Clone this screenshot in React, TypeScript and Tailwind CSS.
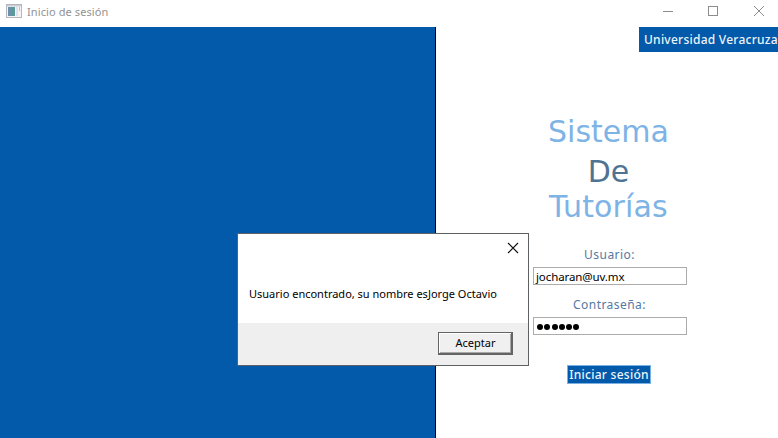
import React from "react";

const uiFont = "font-['Noto_Sans','Open_Sans',sans-serif]";
const wideFont = "font-['DejaVu_Sans',sans-serif]";

function TitleBar() {
  return (
    <header className="flex h-[27px] items-start bg-white">
      <svg className="ml-[6px] mt-[4px] shrink-0" width="16" height="14" viewBox="0 0 16 14">
        <rect x="0.5" y="0.5" width="15" height="13" fill="#f4f4f6" stroke="#b4b8be" />
        <rect x="1" y="1" width="14" height="1.5" fill="#c9ced6" />
        <rect x="2" y="3" width="7" height="9" fill="#5a9a98" />
        <rect x="2" y="3" width="3" height="9" fill="#6e90ad" />
        <rect x="10" y="3" width="2" height="9" fill="#dde2ee" />
        <rect x="13" y="3" width="1" height="4" fill="#b9c3da" />
      </svg>
      <span className="ml-[5px] mt-[4px] whitespace-pre text-[11px] leading-[16px] tracking-[0.1px] text-[#929292]">
        Inicio de sesión
      </span>
      <svg className="ml-auto mr-[13px] mt-[5px] shrink-0" width="103" height="12" viewBox="0 0 103 12" fill="none" stroke="#8c8c8c">
        <path d="M1 6.5h10" />
        <rect x="46.5" y="1.5" width="9" height="9" />
        <path d="M92 1l10 10M102 1L92 11" />
      </svg>
    </header>
  );
}

function Field({ label, children }: { label: string; children: React.ReactNode }) {
  return (
    <div className="flex h-[50px] w-[154px] flex-col items-center">
      <label className="flex h-[22px] items-center pb-[3px] pr-px text-[12px] leading-[16px] tracking-[0.45px] text-[#55799f]">{label}</label>
      <div className="flex h-[18px] w-full items-center border border-[#acacac] bg-white pl-[2px]">{children}</div>
    </div>
  );
}

function LoginPanel() {
  return (
    <section className="flex w-[342px] flex-col overflow-hidden bg-white">
      <div className="ml-[203px] h-[25px] w-[139px] overflow-hidden whitespace-nowrap bg-[#035aaa] pl-[5px] text-[12px] font-medium leading-[25px] tracking-[0.25px] text-[#edf4fb]">
        Universidad Veracruza
      </div>
      <div className="flex flex-col items-center pl-[3px] pt-[62px]">
        <h1 className={`flex flex-col items-center text-[30px] leading-[36px] text-[#7eb3e6] ${wideFont}`}>
          <span className="h-[40px]">Sistema</span>
          <span className="h-[35px] text-[#4f7393]">De</span>
          <span className="h-[36px] tracking-[0.15px]">Tutorías</span>
        </h1>
      </div>
      <form className="ml-[97px] mt-[20px] flex w-[154px] flex-col items-center">
        <Field label="Usuario:">
          <span className="pt-[2px] text-[11.5px] leading-[16px] tracking-[-0.1px] text-black">jocharan@uv.mx</span>
        </Field>
        <Field label="Contraseña:">
          <span className="flex gap-[1.3px] pl-[1px] pt-[2px]">
            {[0, 1, 2, 3, 4, 5].map((n) => (
              <i key={n} className="size-[6px] rounded-full bg-black" />
            ))}
          </span>
        </Field>
        <button type="button" className="mr-[2px] mt-[20px] flex h-[19px] w-[84px] items-center justify-center whitespace-nowrap border border-[#7ab0e2] bg-[#035aaa] text-[12px] font-medium leading-[17px] tracking-[0.27px] text-[#edf4fb]">
          Iniciar sesión
        </button>
      </form>
    </section>
  );
}

function MessageDialog() {
  return (
    <div role="dialog" className="absolute left-[237px] top-[233px] flex h-[133px] w-[292px] flex-col border border-[#5d6164] bg-white">
      <div className="flex h-[89px] flex-col">
        <svg className="ml-auto mr-[9px] mt-[8px]" width="12" height="12" viewBox="0 0 12 12" stroke="#111" strokeWidth="1.1">
          <path d="M1 1l10 10M11 1L1 11" />
        </svg>
        <p className="ml-[11px] mt-[32px] whitespace-nowrap text-[11px] leading-[16px] text-black">
          Usuario encontrado, su nombre esJorge Octavio
        </p>
      </div>
      <div className="flex flex-1 justify-end bg-[#efefef] pr-[15px] pt-[9px]">
        <button type="button" className="flex h-[23px] w-[75px] justify-center border border-b-2 border-r-2 border-[#646464] bg-[#f0f0f0] pl-px pt-px text-[11px] leading-[18px] text-black shadow-[inset_1px_1px_0_#fff,inset_-1px_-1px_0_#a8a8a8]">
          Aceptar
        </button>
      </div>
    </div>
  );
}

export default function App() {
  return (
    <div className={`relative flex h-[438px] w-[778px] flex-col overflow-hidden bg-white ${uiFont}`}>
      <TitleBar />
      <main className="flex flex-1">
        <div className="w-[436px] border-r border-black bg-[#035aaa]" />
        <LoginPanel />
      </main>
      <MessageDialog />
    </div>
  );
}
